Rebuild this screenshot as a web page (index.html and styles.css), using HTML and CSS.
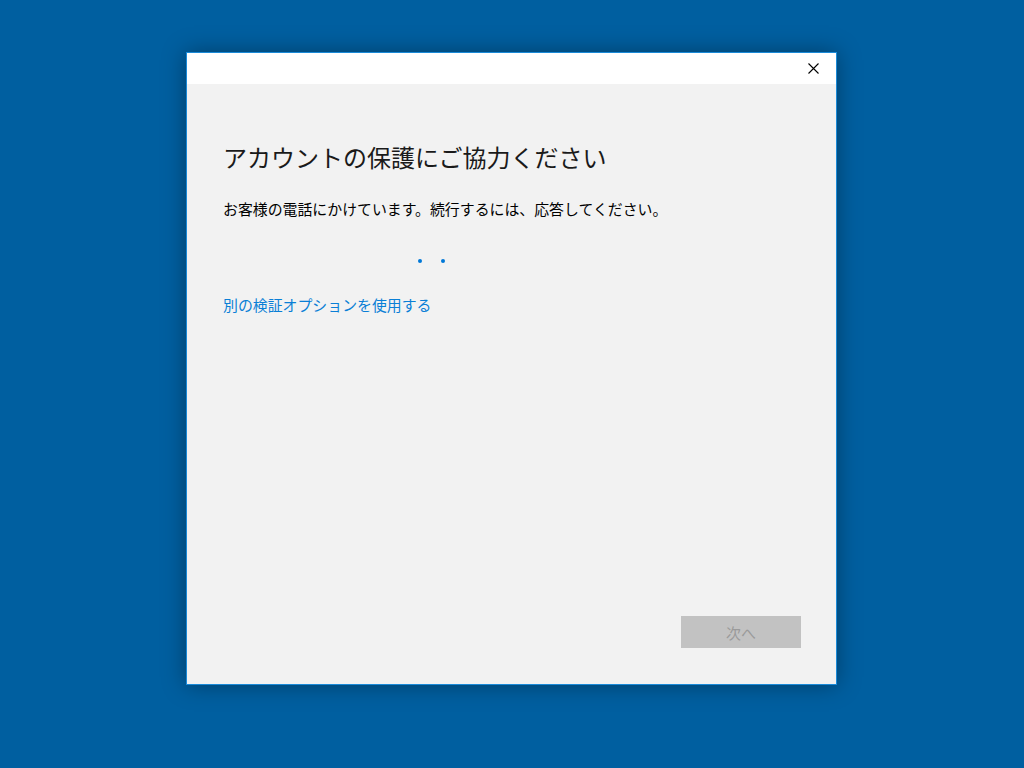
FILE: index.html
```html
<!DOCTYPE html>
<html lang="ja">
<head>
    <meta charset="UTF-8">
    <meta name="viewport" content="width=device-width, initial-scale=1.0">
    <title>アカウントの保護にご協力ください</title>
    <link rel="stylesheet" href="styles.css">
</head>
<body>
    <div class="window">
        <div class="titlebar">
            <button class="close" aria-label="閉じる">
                <svg width="11" height="11" viewBox="0 0 11 11">
                    <path d="M0.5 0.5 L10.5 10.5 M10.5 0.5 L0.5 10.5" stroke="#000" stroke-width="1.1" fill="none"/>
                </svg>
            </button>
        </div>
        <div class="content">
            <h1 class="title">アカウントの保護にご協力ください</h1>
            <p class="message">お客様の電話にかけています。続行するには、応答してください。</p>
            <div class="progress">
                <span class="dot"></span>
                <span class="dot"></span>
            </div>
            <a class="link" href="#">別の検証オプションを使用する</a>
            <div class="actions">
                <button class="next" disabled>次へ</button>
            </div>
        </div>
    </div>
</body>
</html>
```

FILE: styles.css
```css
html, body {
    height: 100%;
}
body {
    margin: 0;
    background-color: #005fa0;
    font-family: "Noto Sans CJK JP", "Noto Sans", sans-serif;
    overflow: hidden;
}
.window {
    box-sizing: border-box;
    width: 651px;
    height: 633px;
    margin: 52px 0 0 186px;
    border: 1px solid #1a8ad8;
    background: #f2f2f2;
    box-shadow: 0 0 22px rgba(0, 0, 0, 0.35);
    display: flex;
    flex-direction: column;
}
.titlebar {
    height: 31px;
    background: #ffffff;
    display: flex;
    justify-content: flex-end;
}
.close {
    width: 46px;
    height: 31px;
    border: none;
    padding: 0;
    background: transparent;
    display: flex;
    align-items: center;
    justify-content: center;
}
.content {
    flex: 1;
    display: flex;
    flex-direction: column;
    align-items: flex-start;
    padding: 57px 35px 36px 36px;
}
.title {
    margin: 0;
    font-size: 24px;
    font-weight: 400;
    line-height: 32px;
    color: #1a1a1a;
}
.message {
    margin: 26px 0 0;
    font-size: 14.9px;
    line-height: 20px;
    color: #000;
}
.progress {
    margin: 40px 0 0 195px;
    display: flex;
    gap: 19px;
}
.dot {
    width: 4px;
    height: 4px;
    border-radius: 50%;
    background: #0078d7;
}
.link {
    margin-top: 32px;
    font-size: 14.9px;
    line-height: 20px;
    color: #0a7fd6;
    text-decoration: none;
}
.actions {
    margin-top: auto;
    align-self: stretch;
    display: flex;
    justify-content: flex-end;
}
.next {
    width: 120px;
    height: 32px;
    border: none;
    background: #c2c2c2;
    color: #9a9a9a;
    font-family: inherit;
    font-size: 15px;
}
```
